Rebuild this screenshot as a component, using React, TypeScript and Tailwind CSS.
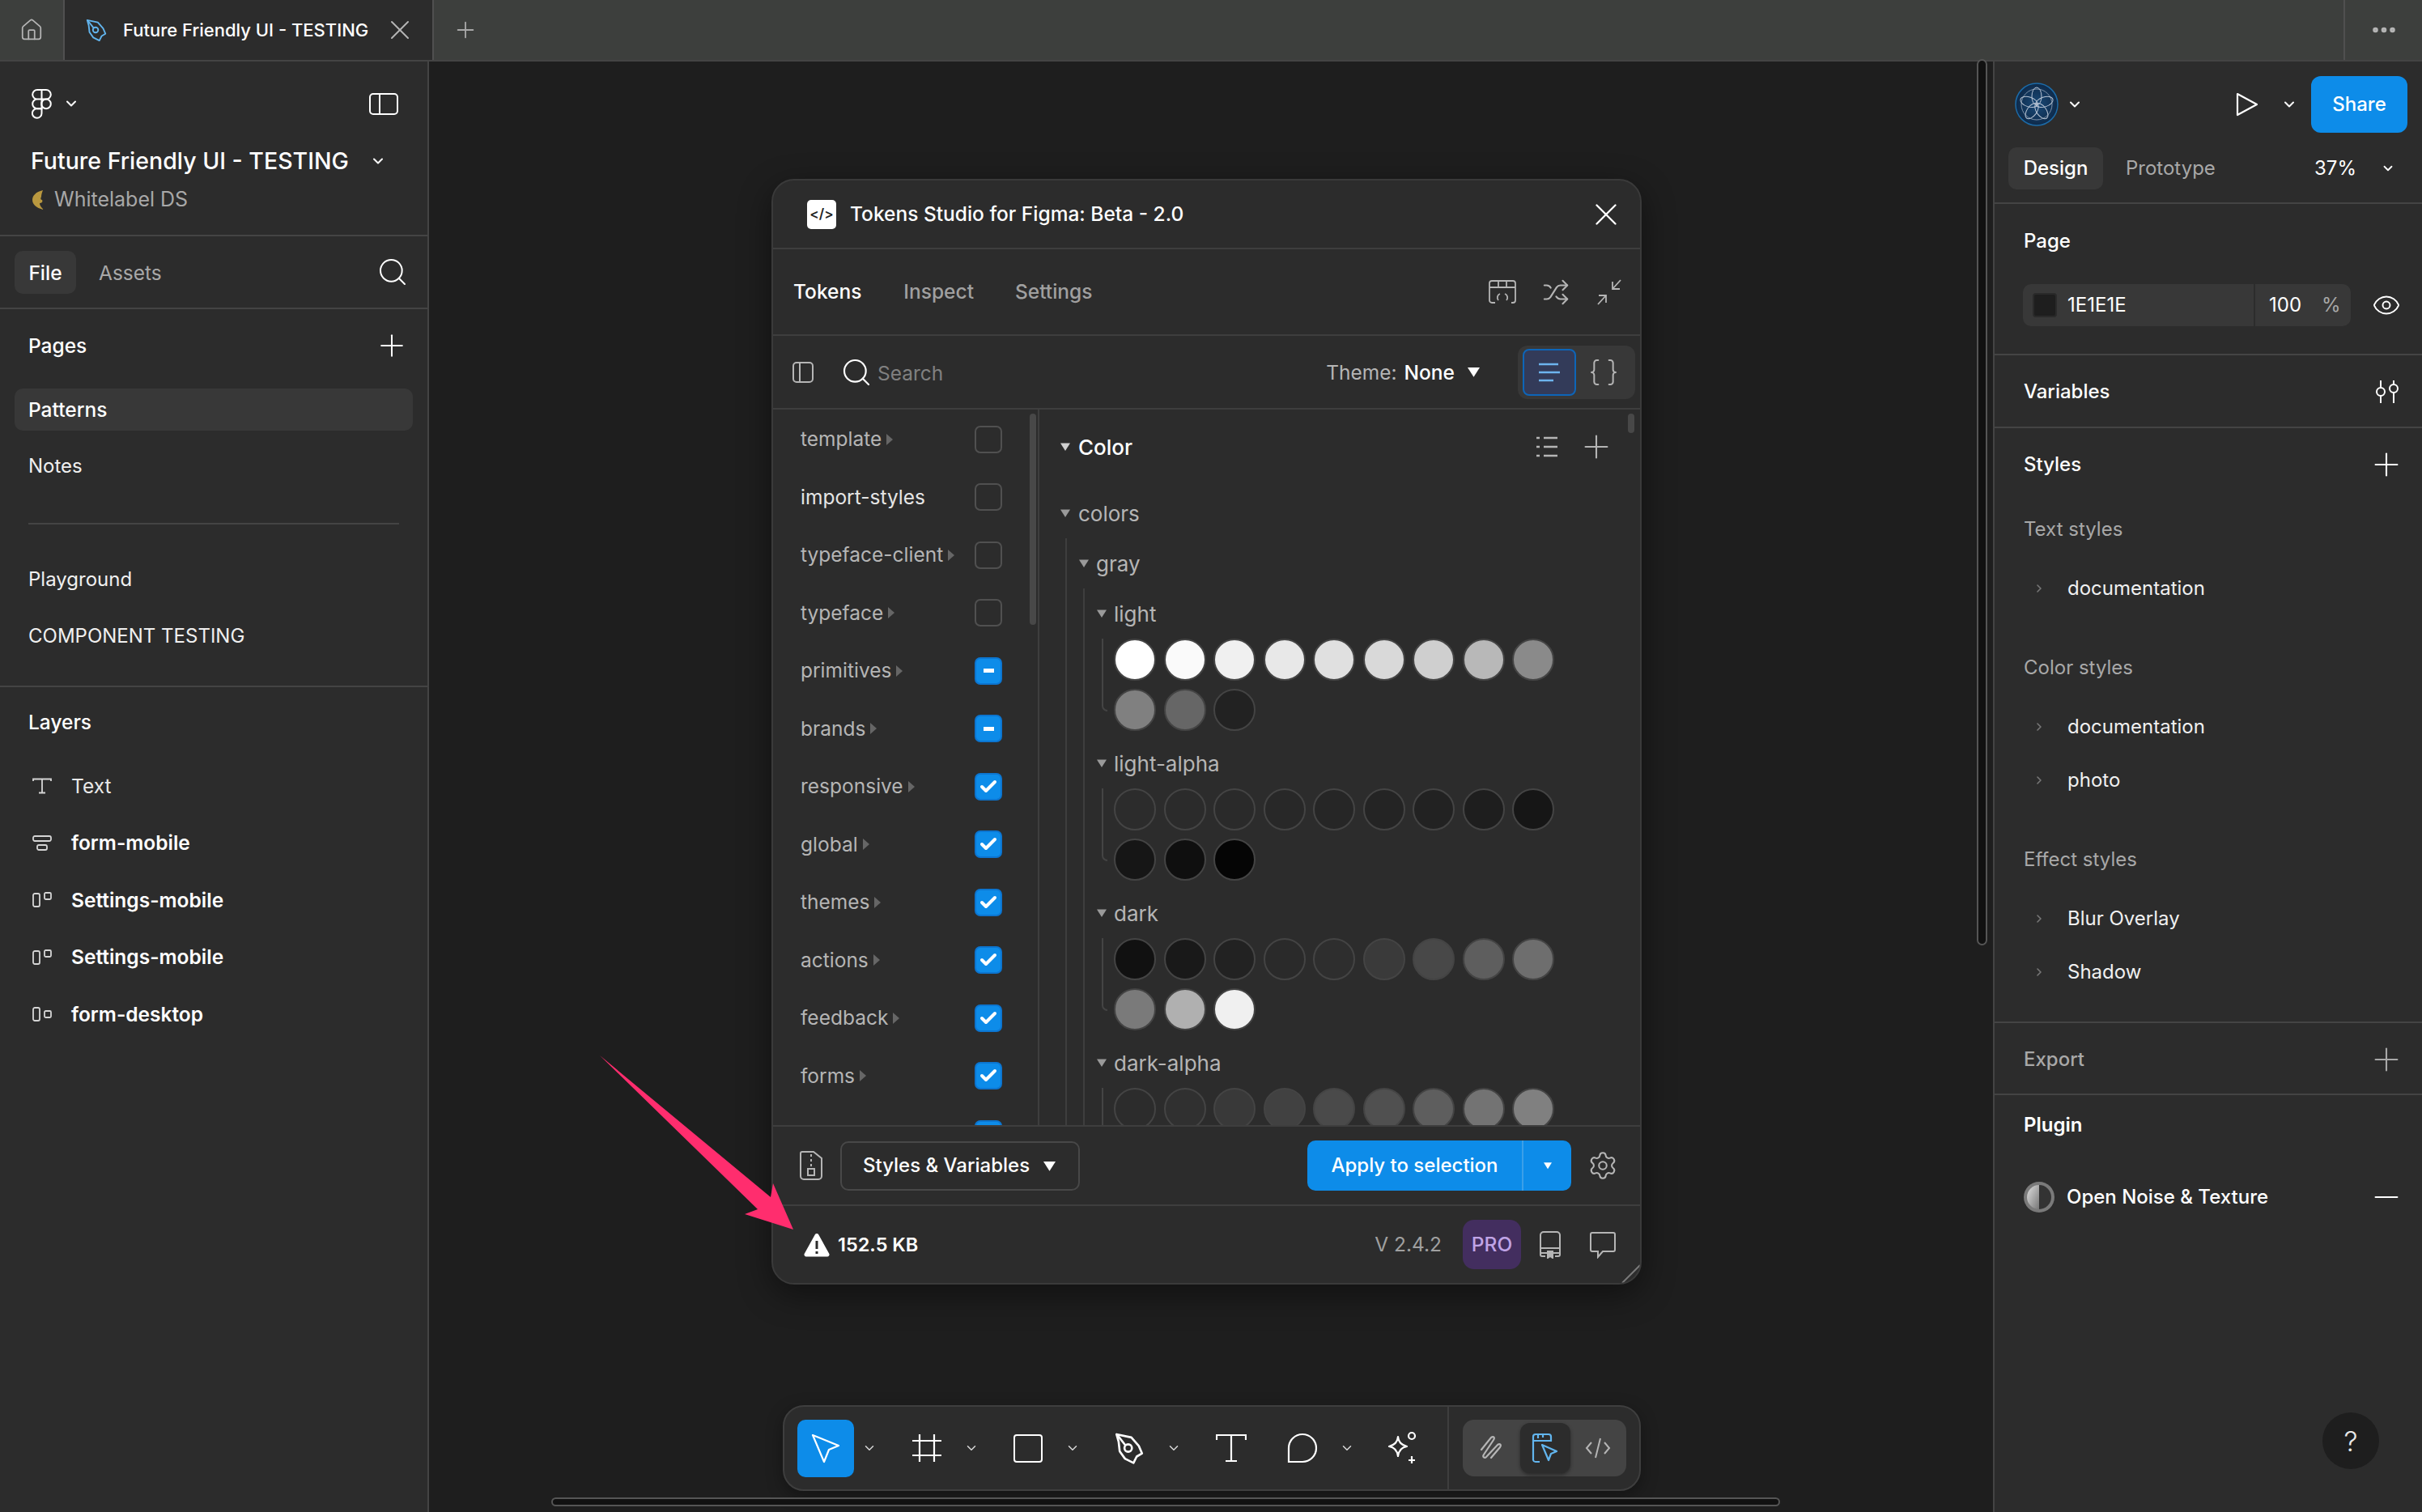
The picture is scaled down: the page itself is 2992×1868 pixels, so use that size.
import React from "react";
import { Braces, Check, ChevronDown, ChevronRight, Ellipsis, Eye, House, Minus, Plus, Search, Settings, Shuffle, X } from "lucide-react";

const sans = "font-['Inter','Noto_Sans',sans-serif]";

type TokenSet = { name: string; state: "off" | "mixed" | "on"; noArrow?: boolean; bright?: boolean };

const tokenSets: TokenSet[] = [
  { name: "template", state: "off" },
  { name: "import-styles", state: "off", bright: true, noArrow: true },
  { name: "typeface-client", state: "off" },
  { name: "typeface", state: "off" },
  { name: "primitives", state: "mixed" },
  { name: "brands", state: "mixed" },
  { name: "responsive", state: "on" },
  { name: "global", state: "on" },
  { name: "themes", state: "on" },
  { name: "actions", state: "on" },
  { name: "feedback", state: "on" },
  { name: "forms", state: "on" },
  { name: "", state: "on", noArrow: true },
];

const swatchGroups = [
  { name: "light", colors: ["#ffffff", "#fafafa", "#f0f0f0", "#e8e8e8", "#e0e0e0", "#d9d9d9", "#cfcfcf", "#b8b8b8", "#8a8a8a", "#808080", "#666666", "#222222"] },
  { name: "light-alpha", colors: ["#2c2c2c", "#2b2b2b", "#2a2a2a", "#282828", "#262626", "#242424", "#222222", "#1e1e1e", "#161616", "#161616", "#0f0f0f", "#050505"] },
  { name: "dark", colors: ["#111111", "#191919", "#222222", "#2a2a2a", "#2e2e2e", "#3a3a3a", "#484848", "#5e5e5e", "#6e6e6e", "#7a7a7a", "#b0b0b0", "#f0f0f0"] },
  { name: "dark-alpha", colors: ["#2c2c2c", "#303030", "#393939", "#414141", "#4a4a4a", "#505050", "#5e5e5e", "#737373", "#808080"] },
];

function Caret({ className = "", w = 12 }: { className?: string; w?: number }) {
  return (
    <svg width={w} height={w} viewBox="0 0 12 12" className={className}>
      <path d="M0 1.5h12L6 11z" fill="currentColor" />
    </svg>
  );
}

function PenIcon({ size = 32, className = "" }: { size?: number; className?: string }) {
  return (
    <svg width={size} height={size} viewBox="0 0 32 32" fill="none" stroke="currentColor" strokeWidth="2" strokeLinejoin="round" className={className}>
      <path d="M4 3l14 3 7 8 3 7-5 3-3 6-8-4-5-7-1-9z" />
      <circle cx="15" cy="16" r="3.5" />
      <path d="M5 4l7.5 9.5" />
    </svg>
  );
}

function LayerIcon({ kind }: { kind: "text" | "stack" | "up" | "mid" }) {
  if (kind === "text") {
    return (
      <svg width="24" height="20" viewBox="0 0 24 20" fill="none" stroke="#d5d5d5" strokeWidth="1.8">
        <path d="M1 4V1.500h22V4M12 1.500v17M8 18.500h8" />
      </svg>
    );
  }
  if (kind === "stack") {
    return (
      <svg width="24" height="20" viewBox="0 0 24 20" fill="none" stroke="#d5d5d5" strokeWidth="1.8">
        <rect x="1" y="1" width="22" height="6" rx="2" />
        <rect x="6" y="12" width="12" height="6" rx="2" />
      </svg>
    );
  }
  const y = kind === "up" ? 1 : 6;
  return (
    <svg width="24" height="20" viewBox="0 0 24 20" fill="none" stroke="#d5d5d5" strokeWidth="1.8">
      <rect x="1" y="2" width="8" height="16" rx="2" />
      <rect x="15" y={y} width="8" height="8" rx="1.5" />
    </svg>
  );
}

function TabBar() {
  return (
    <div className="flex h-[76px] shrink-0 border-b-2 border-[#444444] bg-[#3d3f3d]">
      <div className="flex w-[80px] items-center justify-center border-r-2 border-[#505050]">
        <House size={30} strokeWidth={1.4} className="text-[#b5b5b5]" />
      </div>
      <div className="flex w-[454px] items-center bg-[#2c2c2c] pl-[24px] pr-[20px]">
        <PenIcon size={30} className="text-[#62b5ee]" />
        <span className="ml-[18px] flex-1 text-[22px] font-medium text-white">Future Friendly UI - TESTING</span>
        <X size={40} strokeWidth={1.2} className="text-[#b5b5b5]" />
      </div>
      <div className="flex w-[80px] items-center justify-center border-l-2 border-[#505050]">
        <Plus size={32} strokeWidth={1.4} className="text-[#a8a8a8]" />
      </div>
      <div className="flex-1" />
      <div className="flex w-[97px] items-center justify-center border-l-2 border-[#505050]">
        <Ellipsis size={36} strokeWidth={2.4} className="text-[#b5b5b5]" />
      </div>
    </div>
  );
}

function LeftPanel() {
  const layers: { icon: "text" | "stack" | "up" | "mid"; name: string; bold: boolean }[] = [
    { icon: "text", name: "Text", bold: false },
    { icon: "stack", name: "form-mobile", bold: true },
    { icon: "up", name: "Settings-mobile", bold: true },
    { icon: "up", name: "Settings-mobile", bold: true },
    { icon: "mid", name: "form-desktop", bold: true },
  ];
  return (
    <aside className="flex w-[530px] shrink-0 flex-col border-r-2 border-[#444444] bg-[#2c2c2c] text-[24.5px] text-white">
      <div className="h-[216px] shrink-0 border-b-2 border-[#444444] pl-[39px] pr-[36px] pt-[33px]">
        <div className="flex h-[38px] items-center">
          <svg width="25" height="37" viewBox="0 0 25 37" fill="none" stroke="white" strokeWidth="2">
            <path d="M12.5 1H7a5.8 5.8 0 0 0 0 11.6h5.5zM12.5 1H18a5.8 5.8 0 0 1 0 11.6h-5.5zM12.5 12.6H7a5.800 5.800 0 0 0 0 11.600h5.500z" />
            <circle cx="18" cy="18.4" r="5.8" />
            <path d="M7 24.200h5.500V30A5.800 5.800 0 1 1 7 24.200z" />
          </svg>
          <ChevronDown size={20} strokeWidth={2.4} className="ml-[14px]" />
          <svg width="36" height="27" viewBox="0 0 36 27" fill="none" stroke="white" strokeWidth="2" className="ml-auto">
            <rect x="1" y="1" width="34" height="25" rx="4" />
            <path d="M13 1v25" />
          </svg>
        </div>
        <div className="ml-[-1px] mt-[34px] flex h-[36px] items-center">
          <span className="w-[410px] text-[28.5px] font-medium leading-none">Future Friendly UI - TESTING</span>
          <ChevronDown size={20} strokeWidth={2.4} className="ml-[9px]" />
        </div>
        <div className="mt-[17px] flex h-[26px] items-center text-[25px] text-[#a8a8a8]">
          <svg width="16" height="24" viewBox="0 0 16 24" className="mr-[11px] ml-[1px]">
            <path d="M13 0C4 2 0 7 0 12s4 10 14 12c-3-3-5-5-5-8 3 0 4-2 3-4-2 0-2-2-1-4 0-3 1-5 2-8z" fill="#b9983f" />
          </svg>
          Whitelabel DS
        </div>
      </div>
      <div className="flex h-[90px] shrink-0 items-center border-b-2 border-[#444444] pl-[18px] pr-[23px]">
        <div className="flex h-[53px] w-[76px] items-center justify-center rounded-[10px] bg-[#383838] pt-[2px] font-medium">File</div>
        <span className="ml-[28px] pt-[2px] text-[#a8a8a8]">Assets</span>
        <Search size={40} strokeWidth={1.2} className="ml-auto" />
      </div>
      <div className="flex h-[88px] shrink-0 items-center justify-between pl-[35px] pr-[22px] pt-[2px] font-medium">
        Pages
        <Plus size={44} strokeWidth={1.1} />
      </div>
      <div className="mx-[18px] mt-[10px] flex h-[52px] shrink-0 items-center rounded-[10px] bg-[#383838] pl-[17px] font-medium">Patterns</div>
      <div className="flex h-[88px] shrink-0 items-center pl-[35px] text-[24px] text-[#f0f0f0]">Notes</div>
      <div className="mx-[35px] mt-[26px] h-[2px] shrink-0 bg-[#444444]" />
      <div className="mt-[33px] flex h-[70px] shrink-0 items-center pl-[35px] text-[24px] text-[#f0f0f0]">Playground</div>
      <div className="flex h-[70px] shrink-0 items-center pl-[35px] text-[24px] text-[#f0f0f0]">COMPONENT TESTING</div>
      <div className="mt-[26px] h-[2px] shrink-0 bg-[#444444]" />
      <div className="flex h-[86px] shrink-0 items-center pl-[35px] font-medium">Layers</div>
      <div className="mt-[1px] flex flex-col">
        {layers.map((layer, i) => (
          <div key={i} className="flex h-[70.5px] items-center pl-[40px]">
            <LayerIcon kind={layer.icon} />
            <span className={`ml-[24px] ${layer.bold ? "font-semibold" : "text-[#e8e8e8]"}`}>{layer.name}</span>
          </div>
        ))}
      </div>
    </aside>
  );
}

function TokenRow({ set }: { set: TokenSet }) {
  return (
    <div className="flex h-[71.5px] w-[283px] shrink-0 items-center pl-[34px] text-[24.5px]">
      <span className={set.bright ? "text-[#e5e5e5]" : "text-[#b5b5b5]"}>{set.name}</span>
      {!set.noArrow && (
        <svg width="8" height="14" viewBox="0 0 8 14" className="ml-[6px] text-[#666666]">
          <path d="M0 0l8 7-8 7z" fill="currentColor" />
        </svg>
      )}
      {set.state === "off" ? (
        <div className="ml-auto h-[34px] w-[34px] shrink-0 rounded-[7px] border-2 border-[#505050]" />
      ) : (
        <div className="ml-auto flex h-[34px] w-[34px] shrink-0 items-center justify-center rounded-[7px] border-2 border-[#0c75d0] bg-[#0d8ce9]">
          {set.state === "on" ? <Check size={24} strokeWidth={4} className="text-white" /> : <div className="h-[5px] w-[13px] bg-white" />}
        </div>
      )}
    </div>
  );
}

function SwatchGroup({ name, colors }: { name: string; colors: string[] }) {
  return (
    <div className="mb-[9px]">
      <div className="flex h-[62px] items-center pl-[15px] text-[#b5b5b5]">
        <Caret className="mr-[9px] text-[#9a9a9a]" />
        <span className="text-[26px]">{name}</span>
      </div>
      <div className="ml-[21px] flex">
        <div className="h-[90px] w-[7px] rounded-bl-[8px] border-b-2 border-l-2 border-[#444444]" />
        <div className="ml-[8px] grid grid-cols-[repeat(9,52px)] gap-x-[9.5px] gap-y-[10px]">
          {colors.map((c, i) => (
            <div key={i} className="h-[52px] w-[52px] rounded-full border-2 border-[#444444]" style={{ backgroundColor: c }} />
          ))}
        </div>
      </div>
    </div>
  );
}

function TokensPlugin() {
  return (
    <div className={`absolute left-[423px] top-[145px] flex h-[1366px] w-[1075px] flex-col overflow-hidden rounded-[28px] border-2 border-[#3a3a3a] bg-[#2c2c2c] shadow-[0_12px_40px_rgba(0,0,0,0.45)] ${sans}`}>
      <div className="flex h-[85px] shrink-0 items-center border-b-2 border-[#3e3e3e] pl-[42px] pr-[19px] text-white">
        <div className="flex h-[36px] w-[36px] items-center justify-center rounded-[5px] bg-white text-[17px] font-semibold text-[#222222]">&lt;/&gt;</div>
        <span className="ml-[17px] text-[24.5px] font-medium">Tokens Studio for Figma: Beta - 2.0</span>
        <X size={46} strokeWidth={1.2} className="ml-auto" />
      </div>
      <div className="flex h-[107px] shrink-0 items-center border-b-2 border-[#3e3e3e] pl-[25px] pr-[21px] text-[24.5px] font-medium">
        <span className="text-white">Tokens</span>
        <span className="ml-[52px] text-[#a0a0a0]">Inspect</span>
        <span className="ml-[51px] text-[#a0a0a0]">Settings</span>
        <div className="ml-auto flex items-center gap-[32px] text-[#b5b5b5]">
          <svg width="34" height="30" viewBox="0 0 34 30" fill="none" stroke="currentColor" strokeWidth="1.8">
            <path d="M8 28H4a3 3 0 0 1-3-3V4a3 3 0 0 1 3-3h26a3 3 0 0 1 3 3v21a3 3 0 0 1-3 3h-2M1 9h32M12 1v8M22 1v8" />
            <path d="M14 17a5 5 0 0 0-2 8M20 17a5 5 0 0 1 2 8" />
          </svg>
          <Shuffle size={34} strokeWidth={1.5} />
          <svg width="34" height="34" viewBox="0 0 34 34" fill="none" stroke="currentColor" strokeWidth="1.8">
            <path d="M31 2L21 13M21 4v9h9M3 32l10-11M13 30v-9H4" />
          </svg>
        </div>
      </div>
      <div className="flex h-[91px] shrink-0 items-center border-b-2 border-[#3e3e3e] pl-[24px] pr-[6px] text-[24.5px]">
        <svg width="26" height="26" viewBox="0 0 26 26" fill="none" stroke="#b5b5b5" strokeWidth="2">
          <rect x="1" y="1" width="24" height="24" rx="4" />
          <path d="M9 1v25" />
        </svg>
        <Search size={40} strokeWidth={1.3} className="ml-[33px] text-white" />
        <span className="ml-[6px] pt-[4px] text-[#808080]">Search</span>
        <span className="ml-auto pt-[1px] text-[#b5b5b5]">Theme:</span>
        <span className="ml-[9px] pt-[1px] font-medium text-white">None</span>
        <Caret className="ml-[16px] text-white" w={15} />
        <div className="ml-[47px] flex h-[66px] w-[145px] items-center rounded-[12px] bg-[#383838] px-[6px]">
          <div className="flex h-[58px] w-[66px] items-center justify-center rounded-[8px] border-2 border-[#0d65b8] bg-[#333b59]">
            <svg width="30" height="28" viewBox="0 0 30 28" stroke="#6db4ee" strokeWidth="2.6">
              <path d="M2 4h24M2 14h26M2 24h18" />
            </svg>
          </div>
          <Braces size={40} strokeWidth={1.2} className="ml-[14px] text-[#b5b5b5]" />
        </div>
      </div>
      <div className="flex min-h-0 flex-1">
        <div className="relative w-[329px] shrink-0 overflow-hidden border-r-2 border-[#3e3e3e] pt-[1px]">
          {tokenSets.map((set, i) => (
            <TokenRow key={i} set={set} />
          ))}
          <div className="absolute left-[317px] top-[5px] h-[261px] w-[8px] rounded-full bg-[#484848]" />
        </div>
        <div className="relative min-w-0 flex-1 overflow-hidden">
          <div className="flex h-[92px] items-center pl-[26px] pr-[31px]">
            <Caret className="mr-[10px] text-[#d0d0d0]" />
            <span className="text-[26px] font-medium text-white">Color</span>
            <svg width="28" height="28" viewBox="0 0 28 28" stroke="#b5b5b5" strokeWidth="2.5" className="ml-auto">
              <path d="M1 3h4M10 3h17M1 14h4M10 14h17M1 25h4M10 25h17" />
            </svg>
            <Plus size={46} strokeWidth={1.1} className="ml-[24px] text-[#b5b5b5]" />
          </div>
          <div className="mt-[5px] flex h-[62px] items-center pl-[26px] text-[#b5b5b5]">
            <Caret className="mr-[10px] text-[#9a9a9a]" />
            <span className="text-[26px]">colors</span>
          </div>
          <div className="ml-[32px] border-l-2 border-[#3e3e3e]">
            <div className="flex h-[62px] items-center pl-[15px] text-[#b5b5b5]">
              <Caret className="mr-[9px] text-[#9a9a9a]" />
              <span className="text-[26px]">gray</span>
            </div>
            <div className="ml-[20px] border-l-2 border-[#3e3e3e]">
              {swatchGroups.map((g) => (
                <SwatchGroup key={g.name} name={g.name} colors={g.colors} />
              ))}
            </div>
          </div>
          <div className="absolute right-[7px] top-[5px] h-[24px] w-[8px] rounded-full bg-[#484848]" />
        </div>
      </div>
      <div className="flex h-[98px] shrink-0 items-center border-t-2 border-[#3e3e3e] pl-[33px] pr-[27px]">
        <svg width="28" height="36" viewBox="0 0 28 36" fill="none" stroke="#b5b5b5" strokeWidth="2">
          <path d="M3 1h14l10 8v22a4 4 0 0 1-4 4H5a4 4 0 0 1-4-4V3a2 2 0 0 1 2-2z" />
          <path d="M14 4v3M14 10v3M14 16v3M10 22h8v8h-8z" />
        </svg>
        <div className="ml-[22px] flex h-[61px] w-[296px] items-center rounded-[10px] border-2 border-[#484848] pl-[26px] text-[24px] font-medium text-white">
          Styles &amp; Variables
          <Caret className="ml-[17px]" w={15} />
        </div>
        <div className="ml-auto flex h-[62px] w-[326px] items-center rounded-[10px] bg-[#0d8ce9] text-[24px] font-medium text-white">
          <span className="w-[265px] text-center">Apply to selection</span>
          <div className="flex h-full flex-1 items-center justify-center border-l-2 border-[#3b9fe8]">
            <Caret w={10} />
          </div>
        </div>
        <Settings size={38} strokeWidth={1.3} className="ml-[20px] text-[#b5b5b5]" />
      </div>
      <div className="flex h-[97px] shrink-0 items-center border-t-2 border-[#3e3e3e] pl-[38px] pr-[29px] text-[24.5px]">
        <svg width="32" height="30" viewBox="0 0 32 30">
          <path d="M16 1a2.5 2.5 0 0 1 2.2 1.3l13 23.5A2.5 2.5 0 0 1 29 29.5H3a2.5 2.5 0 0 1-2.2-3.7l13-23.5A2.5 2.5 0 0 1 16 1z" fill="white" />
          <path d="M16 10v10M16 23v3" stroke="#2c2c2c" strokeWidth="3" />
        </svg>
        <span className="ml-[10px] text-[23.5px] font-semibold text-white">152.5 KB</span>
        <span className="ml-auto text-[#a0a0a0]">V 2.4.2</span>
        <div className="ml-[26px] flex h-[61px] w-[72px] items-center justify-center rounded-[14px] bg-[#432e5f] font-medium text-[#c0a4e6]">PRO</div>
        <svg width="26" height="34" viewBox="0 0 26 34" fill="none" stroke="#b5b5b5" strokeWidth="2" className="ml-[23px]">
          <path d="M5 1h16a4 4 0 0 1 4 4v22H1V5a4 4 0 0 1 4-4zM1 21h24M1 27v2a2 2 0 0 0 2 2h4M25 27v2a2 2 0 0 1-2 2h-4" />
          <path d="M10 25h6v8l-3-2-3 2z" fill="#b5b5b5" />
        </svg>
        <svg width="34" height="34" viewBox="0 0 34 34" fill="none" stroke="#b5b5b5" strokeWidth="2" className="ml-[35px]">
          <path d="M4 2h26a2 2 0 0 1 2 2v19a2 2 0 0 1-2 2H17l-6 7v-7H4a2 2 0 0 1-2-2V4a2 2 0 0 1 2-2z" />
        </svg>
      </div>
      <svg width="24" height="24" viewBox="0 0 24 24" className="absolute bottom-0 right-0" stroke="#7a7a7a" strokeWidth="2">
        <path d="M2 24L24 2" />
      </svg>
    </div>
  );
}

function Chev() {
  return <ChevronDown size={18} strokeWidth={2} className="shrink-0 text-[#d8d8d8]" />;
}

function Toolbar() {
  return (
    <div className="absolute left-[437px] top-[1660px] flex h-[106px] w-[1060px] items-center rounded-[26px] border-2 border-[#3e3e3e] bg-[#2c2c2c] pl-[16px] shadow-[0_6px_20px_rgba(0,0,0,0.35)]">
      <div className="flex h-[71px] w-[70px] shrink-0 items-center justify-center rounded-[10px] bg-[#0d8ce9]">
        <svg width="40" height="40" viewBox="0 0 40 40" fill="none" stroke="white" strokeWidth="2.2" strokeLinejoin="round">
          <path d="M4 4l32 13-12 5-6 15z" />
        </svg>
      </div>
      <div className="ml-[10px] mr-[43px]">
        <Chev />
      </div>
      <svg width="38" height="38" viewBox="0 0 38 38" stroke="white" strokeWidth="2.2">
        <path d="M10 2v34M28 2v34M1 10h36M1 28h36" />
      </svg>
      <div className="ml-[27px] mr-[43px]">
        <Chev />
      </div>
      <div className="h-[35px] w-[36px] rounded-[4px] border-2 border-white" />
      <div className="ml-[28px] mr-[40px]">
        <Chev />
      </div>
      <PenIcon size={42} className="text-white" />
      <div className="ml-[25px] mr-[43px]">
        <Chev />
      </div>
      <svg width="38" height="36" viewBox="0 0 38 36" fill="none" stroke="white" strokeWidth="2.2">
        <path d="M1 8V2h36v6M19 2v32M12 34h14" />
      </svg>
      <svg width="38" height="38" viewBox="0 0 38 38" fill="none" stroke="white" strokeWidth="2.2" className="ml-[50px]">
        <path d="M19 2a17 17 0 0 1 0 34H2V19A17 17 0 0 1 19 2z" />
      </svg>
      <div className="ml-[27px] mr-[37px]">
        <Chev />
      </div>
      <svg width="42" height="42" viewBox="0 0 42 42" fill="none" stroke="white" strokeWidth="2.2" strokeLinejoin="round">
        <path d="M17 7c1 7 4 10 11 12-7 1-10 5-11 12-1-7-4-11-11-12 7-2 10-5 11-12z" />
        <circle cx="34" cy="6" r="4" />
        <path d="M34 31v9M30 36h8" />
      </svg>
      <div className="ml-[36px] h-full w-[2px] shrink-0 bg-[#3e3e3e]" />
      <div className="ml-[17px] flex h-[70px] w-[202px] shrink-0 items-center rounded-[14px] bg-[#444444] px-[4px]">
        <svg width="32" height="32" viewBox="0 0 32 32" fill="none" stroke="#b5b5b5" strokeWidth="2.2" strokeLinecap="round" className="ml-[15px]">
          <path d="M4 18L16 3c3-2 5 0 3 3L7 24c-2 3 1 5 3 3L24 12c3-2 5 0 3 3L16 28" />
        </svg>
        <div className="ml-[20px] flex h-[62px] w-[62px] items-center justify-center rounded-[12px] bg-[#2c2c2c] shadow-[0_2px_4px_rgba(0,0,0,0.4)]">
          <svg width="36" height="38" viewBox="0 0 36 38" fill="none" stroke="#62b5ee" strokeWidth="2.2" strokeLinejoin="round">
            <path d="M3 15V5a3 3 0 0 1 3-3h16a3 3 0 0 1 3 3v6M3 34V10h22M9 2v5M15 2v4M3 34a3 3 0 0 0 3 2h5" />
            <path d="M14 15l18 8-7 3-3 8z" />
          </svg>
        </div>
        <svg width="34" height="34" viewBox="0 0 34 34" fill="none" stroke="#b5b5b5" strokeWidth="2" className="ml-[17px]">
          <path d="M9 10l-6 7 6 7M25 10l6 7-6 7M20 5l-6 24" />
        </svg>
      </div>
    </div>
  );
}

function Section({ title, rows }: { title: string; rows: string[] }) {
  return (
    <div className="mb-[58px]">
      <div className="flex h-[40px] items-center text-[24px] text-[#a8a8a8]">{title}</div>
      <div className="mt-[33px] flex flex-col gap-[26px]">
        {rows.map((row) => (
          <div key={row} className="flex h-[40px] items-center text-[24px] text-[#f0f0f0]">
            <ChevronRight size={16} strokeWidth={2.4} className="ml-[11px] text-[#777777]" />
            <span className="ml-[27px]">{row}</span>
          </div>
        ))}
      </div>
    </div>
  );
}

function RightPanel() {
  return (
    <aside className="flex w-[530px] shrink-0 flex-col border-l-2 border-[#444444] bg-[#2c2c2c] text-white">
      <div className="flex h-[106px] shrink-0 items-center pl-[25px] pr-[18px]">
        <svg width="54" height="54" viewBox="0 0 54 54" fill="none">
          <defs>
            <radialGradient id="ava">
              <stop offset="0" stopColor="#1a4a78" />
              <stop offset="1" stopColor="#0e2a4a" />
            </radialGradient>
          </defs>
          <circle cx="27" cy="27" r="26" fill="url(#ava)" stroke="#1c6ba8" strokeWidth="1.5" />
          <circle cx="27" cy="27" r="19" stroke="#7f93aa" strokeWidth="1" />
          {[0, 72, 144, 216, 288].map((a) => (
            <ellipse key={a} cx="27" cy="17" rx="6" ry="11" stroke="#b8c4d4" strokeWidth="1" transform={`rotate(${a} 27 27)`} />
          ))}
        </svg>
        <ChevronDown size={20} strokeWidth={2.4} className="ml-[10px]" />
        <svg width="30" height="32" viewBox="0 0 30 32" fill="none" stroke="white" strokeWidth="2.2" strokeLinejoin="round" className="ml-[187px]">
          <path d="M4 3l24 13L4 29z" />
        </svg>
        <ChevronDown size={20} strokeWidth={2.4} className="ml-[28px]" />
        <div className="ml-[17px] flex h-[70px] w-[119px] items-center justify-center rounded-[12px] bg-[#0d8ce9] text-[24px] font-medium">Share</div>
      </div>
      <div className="flex h-[70px] shrink-0 items-center border-b-2 border-[#444444] pb-[16px] pl-[17px] pr-[33px] text-[24px]">
        <div className="flex h-[52px] w-[117px] items-center justify-center rounded-[10px] bg-[#383838] font-medium">Design</div>
        <span className="ml-[28px] text-[#a8a8a8]">Prototype</span>
        <span className="ml-auto mr-[2px]">37%</span>
        <ChevronDown size={18} strokeWidth={2.4} className="ml-[28px]" />
      </div>
      <div className="h-[187px] shrink-0 border-b-2 border-[#444444] pl-[35px] pr-[26px]">
        <div className="flex h-[90px] items-center pl-[1px] pt-[2px] text-[24px] font-medium">Page</div>
        <div className="mt-[9px] flex items-center">
          <div className="flex h-[52px] w-[405px] items-center rounded-[10px] bg-[#383838] pl-[12px] text-[24px]">
            <div className="h-[30px] w-[30px] rounded-[4px] border-2 border-[#2a2a2a] bg-[#1e1e1e]" />
            <span className="ml-[13px] w-[230px]">1E1E1E</span>
            <div className="h-full w-[2px] bg-[#2c2c2c]" />
            <span className="ml-[17px]">100</span>
            <span className="ml-[25px] text-[#a8a8a8]">%</span>
          </div>
          <Eye size={36} strokeWidth={1.3} className="ml-auto" />
        </div>
      </div>
      <div className="flex h-[90px] shrink-0 items-center justify-between border-b-2 border-[#444444] pl-[36px] pr-[28px] pt-[1px] text-[24px] font-medium">
        Variables
        <svg width="30" height="30" viewBox="0 0 30 30" fill="none" stroke="white" strokeWidth="2">
          <path d="M7 1v9M7 20v9M23 1v5M23 16v13" />
          <circle cx="7" cy="15" r="5" />
          <circle cx="23" cy="11" r="5" />
        </svg>
      </div>
      <div className="flex h-[90px] shrink-0 items-center justify-between pl-[36px] pr-[21px] text-[24px] font-medium">
        Styles
        <Plus size={46} strokeWidth={1.1} />
      </div>
      <div className="h-[645px] shrink-0 overflow-hidden border-b-2 border-[#444444] pl-[36px] pr-[28px] pt-[15px]">
        <Section title="Text styles" rows={["documentation"]} />
        <Section title="Color styles" rows={["documentation", "photo"]} />
        <Section title="Effect styles" rows={["Blur Overlay", "Shadow"]} />
      </div>
      <div className="flex h-[89px] shrink-0 items-center justify-between border-b-2 border-[#444444] pl-[36px] pr-[21px] pt-[2px] text-[24px] font-medium text-[#a8a8a8]">
        Export
        <Plus size={46} strokeWidth={1.1} />
      </div>
      <div className="flex h-[74px] shrink-0 items-center pl-[36px] text-[24px] font-semibold">Plugin</div>
      <div className="mt-[27px] flex h-[50px] shrink-0 items-center pl-[35px] pr-[21px] text-[24px] font-medium">
        <svg width="40" height="40" viewBox="0 0 40 40">
          <defs>
            <linearGradient id="noise" x1="0" y1="0" x2="1" y2="1">
              <stop offset="0" stopColor="#e0e0e0" />
              <stop offset="1" stopColor="#777777" />
            </linearGradient>
          </defs>
          <circle cx="20" cy="20" r="19" fill="#7a7a7a" />
          <path d="M20 5a15 15 0 0 0 0 30z" fill="url(#noise)" />
          <path d="M20 5a15 15 0 0 1 0 30z" fill="#333333" />
        </svg>
        <span className="ml-[14px] flex-1">Open Noise &amp; Texture</span>
        <Minus size={46} strokeWidth={1.1} />
      </div>
    </aside>
  );
}

export default function App() {
  return (
    <div className={`flex h-screen w-full flex-col overflow-hidden bg-[#1e1e1e] ${sans}`}>
      <TabBar />
      <div className="flex min-h-0 flex-1">
        <LeftPanel />
        <main className="relative min-w-0 flex-1">
          <TokensPlugin />
          <Toolbar />
          {/* annotation arrow over the plugin window */}
          <svg width="300" height="260" viewBox="0 0 300 260" className="absolute left-[198px] top-[1228px]">
            <path d="M13 0L224 175l3-17 25 57-60-19 16-6z" fill="#ff2d6e" />
          </svg>
          <div className="absolute right-[7px] top-[-3px] h-[1095px] w-[13px] rounded-full border-2 border-[#555555] bg-[#111111]" />
          <div className="absolute left-[151px] top-[1774px] h-[11px] w-[1518px] rounded-full border-2 border-[#555555] bg-[#111111]" />
        </main>
        <RightPanel />
      </div>
      <div className="fixed bottom-[53px] right-[53px] flex h-[70px] w-[70px] items-center justify-center rounded-full bg-[#1e1e1e] text-[34px] font-light text-[#e8e8e8]">?</div>
    </div>
  );
}
